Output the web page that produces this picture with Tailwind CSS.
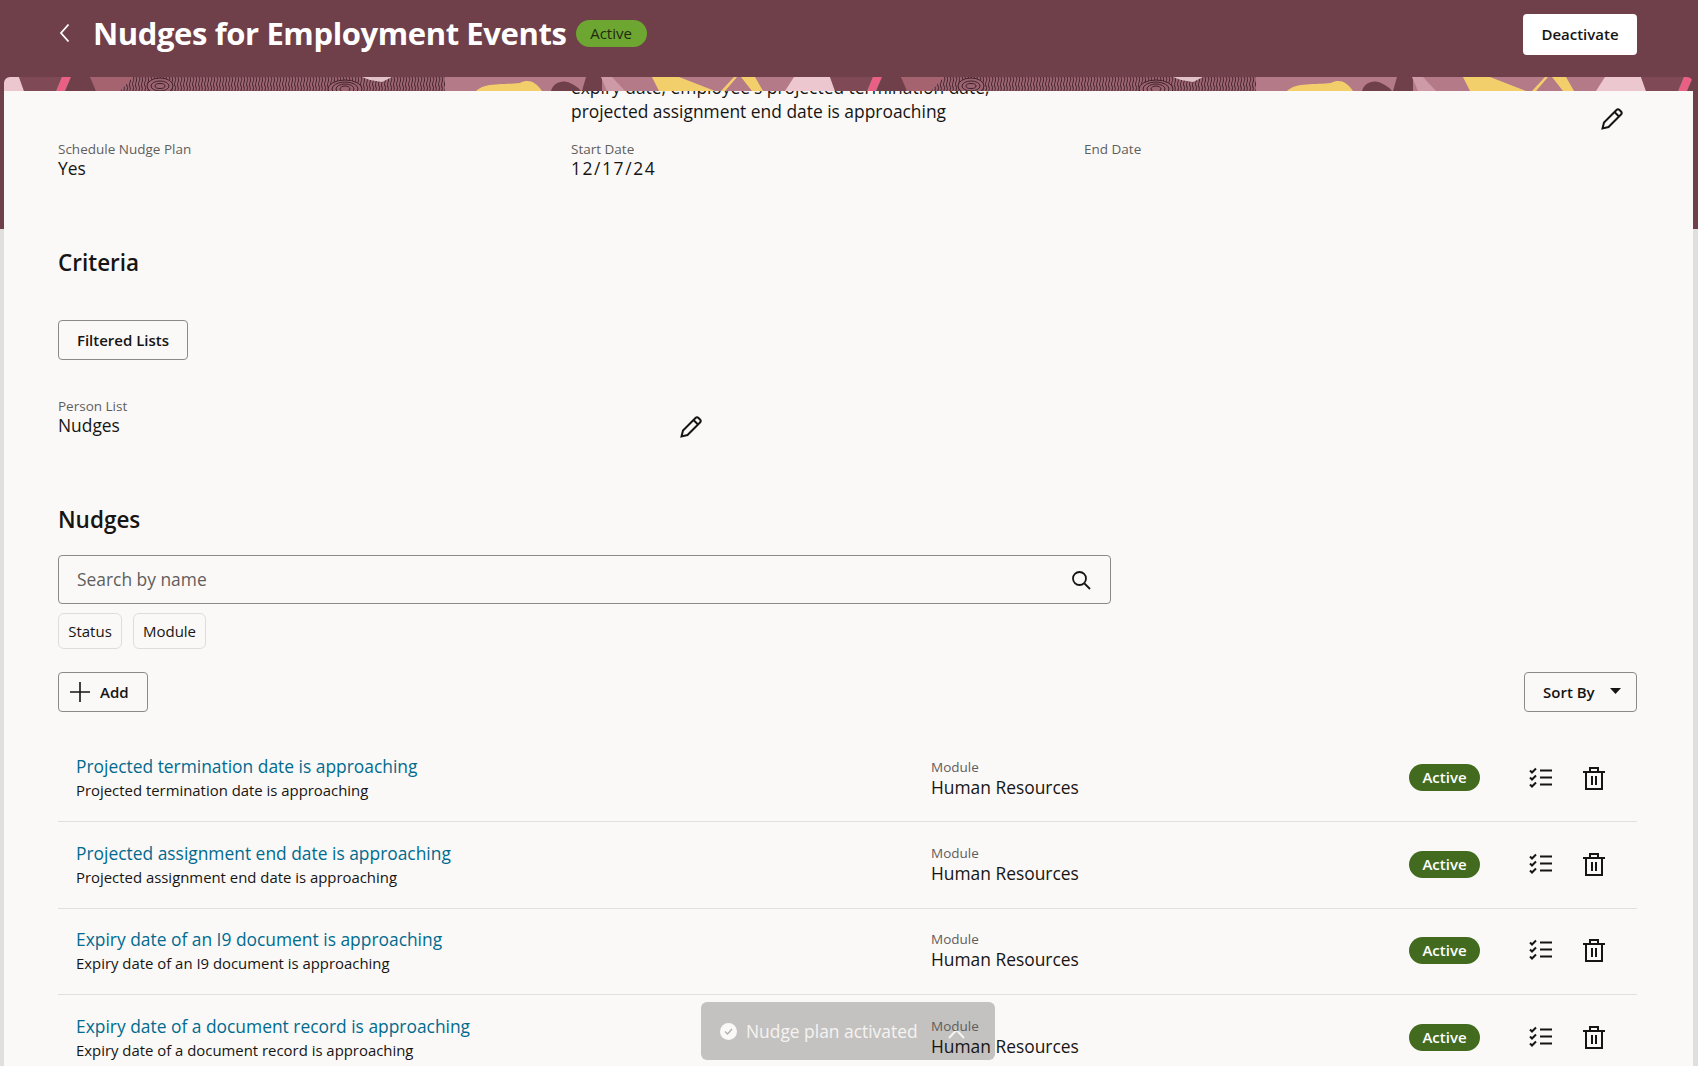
<!DOCTYPE html>
<html>
<head>
<script src="https://cdn.jsdelivr.net/npm/@tailwindcss/browser@4"></script>
</head>
<body class="bg-[#e0dfdd] text-[#161513] font-['Open_Sans',sans-serif] overflow-hidden">

<div class="relative h-[1066px] overflow-hidden">

<!-- maroon hero behind the card -->
<div class="absolute inset-x-0 top-0 h-[229px] bg-[#6f3f4a]"></div>

<div class="relative">

<header class="h-[77px] flex items-center justify-between pl-[58px] pr-[61px] pb-[9px] bg-[#6f3f4a]">
    <div class="flex items-center mb-[2px]">
        <svg class="w-[14px] h-[20px] mr-[21px]" viewBox="0 0 14 20" fill="none" stroke="#fff" stroke-width="1.8"><path d="M10.5 1.5 3 10 10.500 18.500"/></svg>
        <h1 class="text-[31px] leading-none font-bold text-white tracking-[-0.4px]">Nudges for Employment Events</h1>
        <span class="ml-[9px] h-[27px] w-[71px] rounded-full bg-[#6ea632] text-[15px] text-[#1f2a10] flex items-center justify-center">Active</span>
    </div>
    <button class="w-[114px] h-[41px] bg-white rounded text-[15px] font-semibold">Deactivate</button>
</header>

<!-- strip of the banner artwork, repeats every 811px -->
<svg class="block mx-[4px] w-[1689px] h-[14px] rounded-t-[6px]" viewBox="0 0 1689 14">
    <defs>
        <pattern id="prints" width="6" height="14" patternUnits="userSpaceOnUse">
            <path d="M1 0C3.500 3-1 6 1 9 2.500 11 .5 13 1 14M4 0C6 4 2 7 4 10 5 12 3.500 13 4 14" fill="none" stroke="#3f1f28" stroke-width="1"/>
        </pattern>
        <pattern id="banner" x="-4" width="811" height="14" patternUnits="userSpaceOnUse">
            <rect width="811" height="14" fill="#b57a87"/>
            <path d="M0 0H19L24 14H0Z" fill="#ecc7cf"/>
            <path d="M794 0H811V14H785Z" fill="#ecc7cf"/>
            <path d="M19 0H62L56 14H24Z" fill="#7f4955"/>
            <path d="M62 0H71L64 14H57Z" fill="#ec5f85"/>
            <path d="M71 0H90Q95 6 96 14H65Z" fill="#6f3f4a"/>
            <path d="M90 0H133L120 14H96Z" fill="#a5626f"/>
            <path d="M133 0H445V14H120Z" fill="#9a6370"/>
            <path d="M133 0H445V14H120Z" fill="url(#prints)"/>
            <g fill="#9a6370" stroke="#3f1f28" stroke-width="1">
                <ellipse cx="160" cy="9" rx="13" ry="8"/><ellipse cx="160" cy="9" rx="9" ry="5"/><ellipse cx="160" cy="9" rx="5" ry="2.500"/>
                <ellipse cx="345" cy="12" rx="17" ry="9"/><ellipse cx="345" cy="12" rx="13" ry="7"/><ellipse cx="345" cy="12" rx="9" ry="5"/><ellipse cx="345" cy="12" rx="5" ry="3"/>
            </g>
            <path d="M362 0H392L382 5 370 3Z" fill="#e3c3cb"/>
            <path d="M476 14C485 5 505 8 520 6 528 2 535 4 542 14Z" fill="#f3cf6c"/>
            <path d="M551 14C553 6 562 2 570 6 574 8 578 10 581 14Z" fill="#6f3f4a"/>
            <path d="M586 0H602V14H582Z" fill="#6f3f4a"/>
            <path d="M601 0H612L625 14H607Z" fill="#cf9aa8"/>
            <path d="M652 0H679L715 14H659Z" fill="#f3cf6c"/>
            <path d="M721 14 734 0H737L725 14Z" fill="#f3cf6c"/>
            <path d="M741 0H755L763 14H752Z" fill="#f3cf6c"/>
        </pattern>
    </defs>
    <rect width="1689" height="14" fill="url(#banner)"/>
</svg>

<main class="mx-[4px] w-[1689px] h-[975px] bg-[#fbf9f8] relative pl-[54px] pr-[56px]">

    <div class="relative h-[140px] overflow-hidden">
        <p class="absolute left-[513px] -top-[16px] text-[17.400px] leading-[24px] w-[480px]">expiry date, employee's projected termination date, projected assignment end date is approaching</p>
        <svg class="absolute right-[13px] top-[16px] w-[24px] h-[24px]" viewBox="0 0 24 24" fill="none" stroke="#161513" stroke-width="2"><path d="M2.500 21.500 4 15.500 16.500 3Q18 1.500 19.500 3L21 4.500Q22.500 6 21 7.500L8.500 20Z"/><path d="M14.500 5 19 9.500"/></svg>
        <div class="grid grid-cols-[513px_513px_1fr] pt-[49px]">
            <div><div class="text-[13.500px] leading-[18px] text-[#5f5e5c]">Schedule Nudge Plan</div><div class="text-[17.400px] leading-[21px]">Yes</div></div>
            <div><div class="text-[13.500px] leading-[18px] text-[#5f5e5c]">Start Date</div><div class="text-[17.400px] leading-[21px] tracking-[1.6px]">12/17/24</div></div>
            <div><div class="text-[13.500px] leading-[18px] text-[#5f5e5c]">End Date</div></div>
        </div>
    </div>

    <h2 class="mt-[17px] text-[22.500px] leading-[30px] font-semibold">Criteria</h2>
    <button class="mt-[42px] block w-[130px] h-[40px] border border-[#8b8a88] rounded text-[15px] font-semibold">Filtered Lists</button>

    <div class="mt-[37px] relative w-[640px] h-[48px]">
        <div class="text-[13.500px] leading-[18px] text-[#5f5e5c]">Person List</div>
        <div class="text-[17.400px] leading-[21px]">Nudges</div>
        <svg class="absolute left-[621px] top-[18px] w-[24px] h-[24px]" viewBox="0 0 24 24" fill="none" stroke="#161513" stroke-width="2"><path d="M2.500 21.500 4 15.500 16.500 3Q18 1.500 19.500 3L21 4.500Q22.500 6 21 7.500L8.500 20Z"/><path d="M14.500 5 19 9.500"/></svg>
    </div>

    <h2 class="mt-[60px] text-[22.500px] leading-[30px] font-semibold">Nudges</h2>

    <div class="mt-[20px] w-[1053px] h-[49px] border border-[#8b8a88] rounded flex items-center justify-between pl-[18px] pr-[18px]">
        <span class="text-[17.400px] text-[#5f5e5c] -mt-[1px]">Search by name</span>
        <svg class="w-[22px] h-[22px]" viewBox="0 0 22 22" fill="none" stroke="#161513" stroke-width="1.8"><circle cx="9.500" cy="9.500" r="6.500"/><path d="M14.500 14.500 20 20"/></svg>
    </div>

    <div class="mt-[9px] flex gap-[11px]">
        <span class="h-[36px] w-[64px] border border-[#dfdddb] rounded-md flex items-center justify-center text-[15px]">Status</span>
        <span class="h-[36px] w-[73px] border border-[#dfdddb] rounded-md flex items-center justify-center text-[15px]">Module</span>
    </div>

    <div class="mt-[23px] flex justify-between">
        <button class="w-[90px] h-[40px] border border-[#8b8a88] rounded flex items-center pl-[11px] text-[15px] font-semibold">
            <svg class="w-[20px] h-[20px] mr-[10px]" viewBox="0 0 20 20" stroke="#161513" stroke-width="1.6"><path d="M10 0V20M0 10H20"/></svg>Add
        </button>
        <button class="w-[113px] h-[40px] border border-[#8b8a88] rounded flex items-center pl-[18px] text-[15px] font-semibold">
            Sort By<svg class="w-[11px] h-[6px] ml-[15px] mb-[2px]" viewBox="0 0 11 6" fill="#161513"><path d="M0 0H11L5.500 6Z"/></svg>
        </button>
    </div>

    <!-- toast sits behind the row text in the reference -->
    <div class="absolute left-[697px] top-[911px] w-[294px] h-[58px] rounded-md bg-[#c4c2c0] flex items-center pl-[19px]">
        <svg class="w-[17px] h-[17px] mr-[9px]" viewBox="0 0 17 17"><circle cx="8.500" cy="8.500" r="8.500" fill="#fbf9f8"/><path d="M5 8.500 7.500 11 12 6" fill="none" stroke="#b0aeac" stroke-width="1.300"/></svg>
        <span class="text-[17.400px] text-[#f5f4f2]">Nudge plan activated</span>
        <svg class="absolute left-[247px] top-[26px] w-[17px] h-[11px]" viewBox="0 0 17 11" fill="none" stroke="#f5f4f2" stroke-width="2"><path d="M1 10 8.500 2 16 10"/></svg>
    </div>

    <div class="relative mt-[24px]">

        <div class="h-[86.400px] border-b border-[#e2e0de] flex items-center pl-[18px]">
            <div class="w-[855px] mb-[3px]"><a class="block text-[17.400px] leading-[26px] text-[#006b8f]">Projected termination date is approaching</a><div class="text-[14.900px] leading-[22px]">Projected termination date is approaching</div></div>
            <div class="w-[478px] mb-[1px]"><div class="text-[13.500px] leading-[18px] text-[#5f5e5c]">Module</div><div class="text-[17.400px] leading-[23px]">Human Resources</div></div>
            <span class="w-[71px] h-[27px] mb-[2px] rounded-full bg-[#436b1f] text-white text-[15px] font-semibold flex items-center justify-center">Active</span>
            <svg class="ml-[49px] mb-[2px] w-[24px] h-[22px]" viewBox="0 0 24 22" fill="none" stroke="#161513" stroke-width="2"><path d="M1 3.500 3 5.500 7 1.500M1 10.500 3 12.500 7 8.500M1 17.500 3 19.500 7 15.500M11 3.500H23M11 10.500H23M11 17.500H23"/></svg>
            <svg class="ml-[29px] mb-[2px] w-[24px] h-[24px]" viewBox="0 0 24 24" fill="none" stroke="#161513" stroke-width="2"><path d="M1 6H23M4 6V23H20V6M8 6V2H16V6M10 10V19M14 10V19"/></svg>
        </div>

        <div class="h-[86.400px] border-b border-[#e2e0de] flex items-center pl-[18px]">
            <div class="w-[855px] mb-[3px]"><a class="block text-[17.400px] leading-[26px] text-[#006b8f]">Projected assignment end date is approaching</a><div class="text-[14.900px] leading-[22px]">Projected assignment end date is approaching</div></div>
            <div class="w-[478px] mb-[1px]"><div class="text-[13.500px] leading-[18px] text-[#5f5e5c]">Module</div><div class="text-[17.400px] leading-[23px]">Human Resources</div></div>
            <span class="w-[71px] h-[27px] mb-[2px] rounded-full bg-[#436b1f] text-white text-[15px] font-semibold flex items-center justify-center">Active</span>
            <svg class="ml-[49px] mb-[2px] w-[24px] h-[22px]" viewBox="0 0 24 22" fill="none" stroke="#161513" stroke-width="2"><path d="M1 3.500 3 5.500 7 1.500M1 10.500 3 12.500 7 8.500M1 17.500 3 19.500 7 15.500M11 3.500H23M11 10.500H23M11 17.500H23"/></svg>
            <svg class="ml-[29px] mb-[2px] w-[24px] h-[24px]" viewBox="0 0 24 24" fill="none" stroke="#161513" stroke-width="2"><path d="M1 6H23M4 6V23H20V6M8 6V2H16V6M10 10V19M14 10V19"/></svg>
        </div>

        <div class="h-[86.400px] border-b border-[#e2e0de] flex items-center pl-[18px]">
            <div class="w-[855px] mb-[3px]"><a class="block text-[17.400px] leading-[26px] text-[#006b8f]">Expiry date of an I9 document is approaching</a><div class="text-[14.900px] leading-[22px]">Expiry date of an I9 document is approaching</div></div>
            <div class="w-[478px] mb-[1px]"><div class="text-[13.500px] leading-[18px] text-[#5f5e5c]">Module</div><div class="text-[17.400px] leading-[23px]">Human Resources</div></div>
            <span class="w-[71px] h-[27px] mb-[2px] rounded-full bg-[#436b1f] text-white text-[15px] font-semibold flex items-center justify-center">Active</span>
            <svg class="ml-[49px] mb-[2px] w-[24px] h-[22px]" viewBox="0 0 24 22" fill="none" stroke="#161513" stroke-width="2"><path d="M1 3.500 3 5.500 7 1.500M1 10.500 3 12.500 7 8.500M1 17.500 3 19.500 7 15.500M11 3.500H23M11 10.500H23M11 17.500H23"/></svg>
            <svg class="ml-[29px] mb-[2px] w-[24px] h-[24px]" viewBox="0 0 24 24" fill="none" stroke="#161513" stroke-width="2"><path d="M1 6H23M4 6V23H20V6M8 6V2H16V6M10 10V19M14 10V19"/></svg>
        </div>

        <div class="h-[86.400px] flex items-center pl-[18px]">
            <div class="w-[855px] mb-[3px]"><a class="block text-[17.400px] leading-[26px] text-[#006b8f]">Expiry date of a document record is approaching</a><div class="text-[14.900px] leading-[22px]">Expiry date of a document record is approaching</div></div>
            <div class="w-[478px] mb-[1px]"><div class="text-[13.500px] leading-[18px] text-[#5f5e5c]">Module</div><div class="text-[17.400px] leading-[23px]">Human Resources</div></div>
            <span class="w-[71px] h-[27px] mb-[2px] rounded-full bg-[#436b1f] text-white text-[15px] font-semibold flex items-center justify-center">Active</span>
            <svg class="ml-[49px] mb-[2px] w-[24px] h-[22px]" viewBox="0 0 24 22" fill="none" stroke="#161513" stroke-width="2"><path d="M1 3.500 3 5.500 7 1.500M1 10.500 3 12.500 7 8.500M1 17.500 3 19.500 7 15.500M11 3.500H23M11 10.500H23M11 17.500H23"/></svg>
            <svg class="ml-[29px] mb-[2px] w-[24px] h-[24px]" viewBox="0 0 24 24" fill="none" stroke="#161513" stroke-width="2"><path d="M1 6H23M4 6V23H20V6M8 6V2H16V6M10 10V19M14 10V19"/></svg>
        </div>
    </div>
</main>
</div>

</div>
</body>
</html>
